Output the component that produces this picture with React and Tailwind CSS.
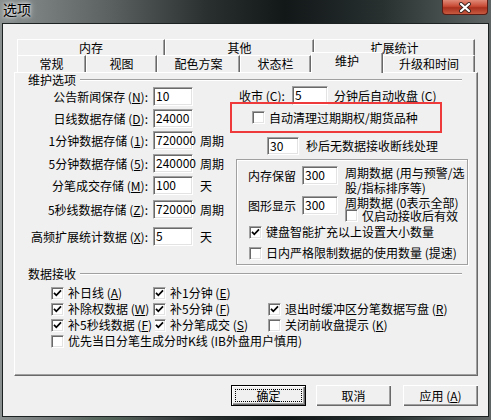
import React from "react";

const sunken =
  "border border-t-[#a0a0a0] border-l-[#a0a0a0] border-b-white border-r-white bg-white shadow-[inset_1px_1px_0_#696969,inset_-1px_-1px_0_#e3e3e3]";

function Box({ checked }) {
  return (
    <span className={`inline-flex h-[13px] w-[13px] shrink-0 items-center justify-center ${sunken}`}>
      {checked && (
        <svg width="9" height="9" viewBox="0 0 9 9">
          <path d="M1 3.8 L3.3 6.3 L8 1.3" stroke="#000" strokeWidth="1.7" fill="none" />
        </svg>
      )}
    </span>
  );
}

function Field({ value, w, h = "h-[19px]" }) {
  return (
    <div className={`${w} ${h} ${sunken} shrink-0 pl-[2px] leading-[16px] text-[12px]`}>{value}</div>
  );
}

function Tab({ label, w, selected }) {
  return (
    <div
      className={`${w} flex shrink-0 items-center justify-center border-l border-t border-l-white border-t-white border-r border-r-[#696969] shadow-[inset_-1px_0_0_#a0a0a0] bg-[#f0f0f0] ${
        selected ? "relative z-10 -mt-[3px] h-[21px] pb-[4px]" : "h-full"
      }`}
    >
      {label}
    </div>
  );
}

function Group({ label }) {
  return (
    <div className="ml-[13px] mr-[15px] flex h-[12px] items-center">
      <span className="leading-[12px]">{label}</span>
      <div className="ml-[4px] h-[2px] flex-1 border-t border-t-[#a0a0a0] border-b border-b-white" />
    </div>
  );
}

function Button({ children, primary }) {
  return (
    <div
      className={`relative flex h-[21px] w-[75px] items-center justify-center bg-[#f0f0f0] ${
        primary
          ? "border border-black shadow-[inset_1px_1px_0_#fff,inset_-1px_-1px_0_#696969,inset_-2px_-2px_0_#a0a0a0]"
          : "shadow-[inset_1px_1px_0_#fff,inset_-1px_-1px_0_#696969,inset_-2px_-2px_0_#a0a0a0]"
      }`}
    >
      {primary && <div className="absolute inset-[3px] border border-dotted border-black" />}
      <span className="relative">{children}</span>
    </div>
  );
}

const leftRows = [
  { label: <>公告新闻保存 (<u>N</u>):</>, value: "10", unit: "", mt: "mt-[1px]" },
  { label: <>日线数据存储 (<u>D</u>):</>, value: "24000", unit: "", mt: "mt-[3px]" },
  { label: <>1分钟数据存储 (<u>1</u>):</>, value: "720000", unit: "周期", mt: "mt-[3px]" },
  { label: <>5分钟数据存储 (<u>5</u>):</>, value: "240000", unit: "周期", mt: "mt-[4px]" },
  { label: <>分笔成交存储 (<u>M</u>):</>, value: "100", unit: "天", mt: "mt-[3px]" },
  { label: <>5秒线数据存储 (<u>Z</u>):</>, value: "720000", unit: "周期", mt: "mt-[5px]" },
  { label: <>高频扩展统计数据 (<u>X</u>):</>, value: "5", unit: "天", mt: "mt-[8px]" },
];

function Check({ checked, children, cover }) {
  return (
    <div className="flex h-[16px] items-center whitespace-nowrap">
      <Box checked={checked} />
      <span className={`ml-[4px] ${cover ? "relative z-10 bg-[#f0f0f0] pr-[3px]" : ""}`}>{children}</span>
    </div>
  );
}

export default function App() {
  return (
    <div className="relative h-[420px] w-[491px] overflow-hidden bg-[radial-gradient(circle_at_22%_110%,#3f6e4a_0,transparent_60px),radial-gradient(circle_at_58%_90%,#2f5a3a_0,transparent_40px),linear-gradient(90deg,#8a9090_0%,#5c6262_22%,#2a2f30_42%,#121718_58%,#283030_78%,#5f6565_100%)] font-['Noto_Sans_CJK_SC',sans-serif] text-[12px] text-black">
      {/* title bar */}
      <div className="flex h-[23px] items-start">
        <span className="ml-[3px] mt-[1px] text-[14px] leading-[17px] text-black [text-shadow:0_0_6px_#ffffff,0_0_3px_#ffffff]">选项</span>
        <div className="ml-auto mr-[3px] flex h-[15px] w-[46px] items-center justify-center rounded-b-[4px] border border-t-0 border-[#5a1c14] bg-[linear-gradient(180deg,#e08a78_0%,#c84a34_45%,#a8301e_55%,#c85a40_100%)]">
          <svg width="14" height="11" viewBox="0 0 14 11">
            <path d="M3 2 L11 9 M11 2 L3 9" stroke="#3a2420" strokeWidth="4" strokeLinecap="round" />
            <path d="M3 2 L11 9 M11 2 L3 9" stroke="#fff" strokeWidth="2.2" strokeLinecap="round" />
          </svg>
        </div>
      </div>

      {/* client area */}
      <div className="mx-[2px] h-[394px] border border-[#1c2222] bg-[#f0f0f0] pl-[11px] pt-[15px]">
        {/* tabs */}
        <div className="ml-[3px] flex h-[16px]">
          <Tab label="内存" w="w-[148px]" />
          <Tab label="其他" w="w-[149px]" />
          <Tab label="扩展统计" w="w-[161px]" />
        </div>
        <div className="ml-[3px] flex h-[17px] items-start">
          <Tab label="常规" w="w-[69px]" />
          <Tab label="视图" w="w-[71px]" />
          <Tab label="配色方案" w="w-[83px]" />
          <Tab label="状态栏" w="w-[71px]" />
          <Tab label="维护" w="w-[72px]" selected />
          <Tab label="升级和时间" w="w-[92px]" />
        </div>

        {/* panel */}
        <div className="h-[304px] w-[464px] border border-l-white border-t-white border-r-[#696969] border-b-[#696969] shadow-[inset_-1px_-1px_0_#a0a0a0] pt-[1px]">
          <Group label="维护选项" />

          <div className="flex items-start">
            {/* left column */}
            <div className="w-[215px] shrink-0">
              {leftRows.map((r, i) => (
                <div key={i} className={`flex h-[19px] items-center ${r.mt}`}>
                  <span className="w-[133px] shrink-0 whitespace-nowrap text-right">{r.label}</span>
                  <div className="ml-[5px]">
                    <Field value={r.value} w="w-[40px]" />
                  </div>
                  {r.unit && <span className="ml-[7px] whitespace-nowrap">{r.unit}</span>}
                </div>
              ))}
            </div>

            {/* right column */}
            <div className="flex-1">
              <div className="ml-[9px] flex h-[19px] items-center whitespace-nowrap">
                <span className="w-[53px] shrink-0">收市 (<u>C</u>):</span>
                <Field value="5" w="w-[36px]" />
                <span className="ml-[6px]">分钟后自动收盘 (<u>C</u>)</span>
              </div>

              <div className="relative -mt-[3px] flex h-[31px] w-[212px] items-center border-2 border-[#ee3a3a] pl-[20px]">
                <Box />
                <span className="ml-[4px] whitespace-nowrap">自动清理过期期权/期货品种</span>
              </div>

              <div className="ml-[37px] mt-[4px] flex h-[18px] items-center whitespace-nowrap">
                <Field value="30" w="w-[32px]" h="h-[18px]" />
                <span className="ml-[7px]">秒后无数据接收断线处理</span>
              </div>

              <div className="ml-[6px] mt-[4px] h-[106px] w-[232px] border border-[#a0a0a0] shadow-[1px_1px_0_#fff,inset_1px_1px_0_#fff]">
                <div className="ml-[11px] mt-[6px] flex h-[30px] items-start whitespace-nowrap">
                  <span className="flex h-[19px] w-[54px] shrink-0 items-center">内存保留</span>
                  <Field value="300" w="w-[36px]" />
                  <div className="-mt-[1px] ml-[7px] leading-[15px]">
                    <div>周期数据 (用与预警/选</div>
                    <div>股/指标排序等)</div>
                  </div>
                </div>
                <div className="ml-[11px] flex h-[26px] items-start whitespace-nowrap">
                  <span className="flex h-[19px] w-[54px] shrink-0 items-center">图形显示</span>
                  <Field value="300" w="w-[36px]" />
                  <div className="ml-[7px]">
                    <div className="leading-[13px]">周期数据 (0表示全部)</div>
                    <div className="flex h-[13px] items-center">
                      <Box />
                      <span className="ml-[4px]">仅启动接收后有效</span>
                    </div>
                  </div>
                </div>
                <div className="ml-[12px] mt-[3px] flex h-[14px] items-center whitespace-nowrap">
                  <Box checked />
                  <span className="ml-[4px]">键盘智能扩充以上设置大小数量</span>
                </div>
                <div className="ml-[12px] mt-[7px] flex h-[14px] items-center whitespace-nowrap">
                  <Box />
                  <span className="ml-[4px]">日内严格限制数据的使用数量 (提速)</span>
                </div>
              </div>
            </div>
          </div>

          <div className="mt-[3px]">
            <Group label="数据接收" />
          </div>

          <div className="mt-[5px] pl-[36px]">
            <div className="flex">
              <div className="w-[102px] shrink-0">
                <Check checked>补日线 (<u>A</u>)</Check>
              </div>
              <div className="w-[115px] shrink-0">
                <Check checked>补1分钟 (<u>E</u>)</Check>
              </div>
            </div>
            <div className="flex">
              <div className="w-[102px] shrink-0">
                <Check checked>补除权数据 (<u>W</u>)</Check>
              </div>
              <div className="w-[115px] shrink-0">
                <Check checked>补5分钟 (<u>F</u>)</Check>
              </div>
              <Check checked>退出时缓冲区分笔数据写盘 (<u>R</u>)</Check>
            </div>
            <div className="flex">
              <div className="relative z-10 w-[102px] shrink-0">
                <Check checked cover>补5秒线数据 (<u>F</u>)</Check>
              </div>
              <div className="w-[115px] shrink-0">
                <Check checked>补分笔成交 (<u>S</u>)</Check>
              </div>
              <Check>关闭前收盘提示 (<u>K</u>)</Check>
            </div>
            <Check>优先当日分笔生成分时K线 (IB外盘用户慎用)</Check>
          </div>
        </div>

        {/* buttons */}
        <div className="mr-[10px] mt-[9px] flex justify-end">
          <Button primary>确定</Button>
          <div className="ml-[10px]">
            <Button>取消</Button>
          </div>
          <div className="ml-[12px]">
            <Button>应用 (<u>A</u>)</Button>
          </div>
        </div>
      </div>
    </div>
  );
}
